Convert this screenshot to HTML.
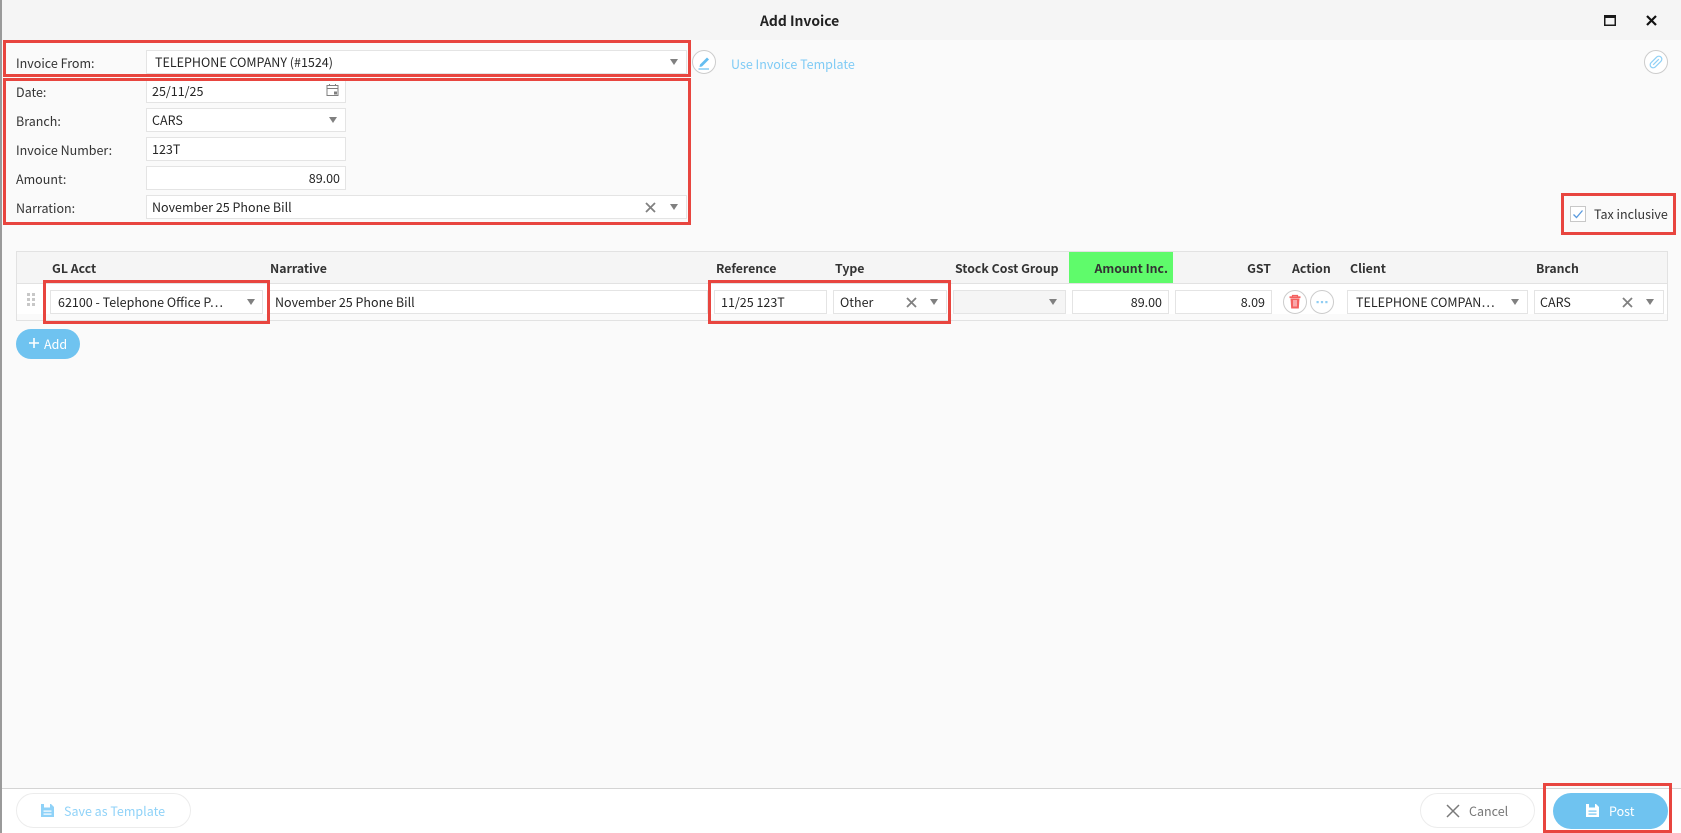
<!DOCTYPE html>
<html><head><meta charset="utf-8"><style>
html,body{margin:0;padding:0}
body{width:1681px;height:833px;position:relative;overflow:hidden;background:#fafafa;font-family:"Noto Sans CJK JP","Liberation Sans",sans-serif;font-size:12.5px;color:#262626}
div,svg,span{box-sizing:border-box}
.a{position:absolute}
.t{position:absolute;white-space:nowrap;line-height:20px}
.l{position:absolute;left:16px;color:#333;white-space:nowrap;line-height:20px}
.i{position:absolute;background:#fff;border:1px solid #e4e4e4;height:24px;line-height:20px;white-space:nowrap;overflow:hidden}
.arr{position:absolute;width:0;height:0;border-left:4px solid transparent;border-right:4px solid transparent;border-top:6px solid #808080}
.h{position:absolute;top:258px;font-weight:700;color:#333;white-space:nowrap;line-height:20px;font-size:12.3px}
.red{position:absolute;border:3px solid #e8453f;pointer-events:none}
.c{position:absolute;width:24px;height:24px;border-radius:50%;border:1px solid #ccc;background:#fff}
</style></head><body>
<div class="a" style="left:0;top:0;width:1681px;height:40px;background:#f5f5f5"></div>
<div class="a" style="left:0;top:0;width:2px;height:833px;background:#9a9a9a"></div>
<div class="t" style="left:760px;top:11px;font-weight:700;font-size:13.9px;color:#222">Add Invoice</div>
<svg class="a" style="left:1604px;top:15px" width="12" height="11"><rect x=".75" y=".75" width="10.5" height="9.5" fill="none" stroke="#1a1a1a" stroke-width="1.5"/><rect x="0" y="0" width="12" height="3" fill="#1a1a1a"/></svg>
<svg class="a" style="left:1646px;top:15px" width="11" height="11"><path d="M1 1L10 10M10 1L1 10" stroke="#111" stroke-width="2.2" fill="none"/></svg>

<div class="l" style="top:53px">Invoice From:</div>
<div class="i" style="left:146px;top:50px;width:541px;padding:1px 8px">TELEPHONE COMPANY (#1524)</div>
<div class="arr" style="left:670px;top:59px"></div>
<div class="c" style="left:692px;top:50px"></div>
<svg class="a" style="left:692px;top:50px" width="24" height="24"><path d="M8 14.5L15 7.5L17 9.5L10 16.5L7.5 17Z" fill="#64bdf0"/><path d="M6.5 19H17" stroke="#64bdf0" stroke-width="1.2"/></svg>
<div class="t" style="left:731px;top:54px;color:#7fcbf5">Use Invoice Template</div>
<div class="c" style="left:1644px;top:50px"></div>
<svg class="a" style="left:1644px;top:50px" width="24" height="24"><g transform="rotate(-45 12 12)" fill="none" stroke="#8fd0f6" stroke-width="1.2"><rect x="5" y="9" width="14" height="6" rx="3"/><path d="M8 12H16"/></g></svg>

<div class="l" style="top:82px">Date:</div>
<div class="i" style="left:146px;top:78px;width:200px;padding:3px 5px 0;border-top:0;height:25px">25/11/25</div>
<svg class="a" style="left:326px;top:83px" width="14" height="14"><rect x="1" y="2.5" width="11" height="10" fill="none" stroke="#7f7f7f"/><path d="M1 5.5H12M3.5 1V3M9.5 1V3" stroke="#7f7f7f"/><rect x="8" y="8.5" width="3" height="3" fill="#7f7f7f"/></svg>
<div class="l" style="top:111px">Branch:</div>
<div class="i" style="left:146px;top:108px;width:200px;padding:1px 5px">CARS</div>
<div class="arr" style="left:329px;top:117px"></div>
<div class="l" style="top:140px">Invoice Number:</div>
<div class="i" style="left:146px;top:137px;width:200px;padding:1px 5px">123T</div>
<div class="l" style="top:169px">Amount:</div>
<div class="i" style="left:146px;top:166px;width:200px;padding:1px 5px;text-align:right">89.00</div>
<div class="l" style="top:198px">Narration:</div>
<div class="i" style="left:146px;top:195px;width:541px;padding:1px 5px">November 25 Phone Bill</div>
<svg class="a" style="left:645px;top:202px" width="11" height="11"><path d="M1 1L10 10M10 1L1 10" stroke="#808080" stroke-width="1.8"/></svg>
<div class="arr" style="left:670px;top:204px"></div>

<div class="a" style="left:1570px;top:206px;width:16px;height:16px;border:1px solid #c8c8c8;background:#fff"></div>
<svg class="a" style="left:1570px;top:206px" width="16" height="16"><path d="M3.5 8.5L6.5 11.5L12.5 4.5" fill="none" stroke="#5a9ade" stroke-width="1.3"/></svg>
<div class="t" style="left:1594px;top:204px;color:#333">Tax inclusive</div>

<!-- table -->
<div class="a" style="left:16px;top:251px;width:1652px;height:70px;border:1px solid #e2e2e2;background:#fff"></div>
<div class="a" style="left:17px;top:252px;width:1650px;height:32px;background:#f5f5f5;border-bottom:1px solid #e2e2e2"></div>
<div class="a" style="left:17px;top:314px;width:1650px;height:6px;background:#fafafa"></div>
<div class="a" style="left:1069px;top:252px;width:104px;height:31px;background:#5ffb6b"></div>
<div class="h" style="left:52px">GL Acct</div>
<div class="h" style="left:270px">Narrative</div>
<div class="h" style="left:716px">Reference</div>
<div class="h" style="left:835px">Type</div>
<div class="h" style="left:955px">Stock Cost Group</div>
<div class="h" style="right:513px">Amount Inc.</div>
<div class="h" style="right:410px">GST</div>
<div class="h" style="left:1292px">Action</div>
<div class="h" style="left:1350px">Client</div>
<div class="h" style="left:1536px">Branch</div>

<svg class="a" style="left:27px;top:293px" width="10" height="15" fill="#c8c8c8"><rect width="3" height="3"/><rect x="5" width="3" height="3"/><rect y="5" width="3" height="3"/><rect x="5" y="5" width="3" height="3"/><rect y="10" width="3" height="3"/><rect x="5" y="10" width="3" height="3"/></svg>
<div class="i" style="left:50px;top:290px;width:213px;padding:1px 7px 0">62100 - Telephone Office P…</div>
<div class="arr" style="left:247px;top:299px"></div>
<div class="i" style="left:269px;top:290px;width:439px;padding:1px 6px 0;border-left:0">November 25 Phone Bill</div>
<div class="i" style="left:714px;top:290px;width:113px;padding:1px 6px 0">11/25 123T</div>
<div class="i" style="left:833px;top:290px;width:114px;padding:1px 6px 0">Other</div>
<svg class="a" style="left:906px;top:297px" width="11" height="11"><path d="M1 1L10 10M10 1L1 10" stroke="#808080" stroke-width="1.8"/></svg>
<div class="arr" style="left:930px;top:299px"></div>
<div class="i" style="left:953px;top:290px;width:113px;background:#f5f5f5"></div>
<div class="arr" style="left:1049px;top:299px"></div>
<div class="i" style="left:1072px;top:290px;width:97px;padding:1px 6px 0;text-align:right">89.00</div>
<div class="i" style="left:1175px;top:290px;width:97px;padding:1px 6px 0;text-align:right">8.09</div>
<div class="c" style="left:1283px;top:290px"></div>
<svg class="a" style="left:1283px;top:290px" width="24" height="24"><path d="M6.5 7.2H17.5" stroke="#f4605f" stroke-width="1.8"/><path d="M9.5 7V5.5H14.5V7" fill="none" stroke="#f4605f" stroke-width="1.2"/><path d="M7.5 8.5H16.5L15.8 18.5H8.2Z" fill="#f4605f"/><rect x="10" y="10" width="4" height="6.5" fill="#f9a6a8"/></svg>
<div class="c" style="left:1310px;top:290px"></div>
<svg class="a" style="left:1310px;top:290px" width="24" height="24" fill="#8fcdf3"><rect x="6.5" y="11" width="2.2" height="2.2"/><rect x="10.9" y="11" width="2.2" height="2.2"/><rect x="15.3" y="11" width="2.2" height="2.2"/></svg>
<div class="i" style="left:1347px;top:290px;width:181px;padding:1px 8px 0">TELEPHONE COMPAN…</div>
<div class="arr" style="left:1511px;top:299px"></div>
<div class="i" style="left:1534px;top:290px;width:130px;padding:1px 5px 0">CARS</div>
<svg class="a" style="left:1622px;top:297px" width="11" height="11"><path d="M1 1L10 10M10 1L1 10" stroke="#808080" stroke-width="1.8"/></svg>
<div class="arr" style="left:1646px;top:299px"></div>

<div class="a" style="left:16px;top:329px;width:64px;height:30px;border-radius:15px;background:#6fc3f0"></div>
<svg class="a" style="left:28px;top:337px" width="12" height="12"><path d="M6 1V11M1 6H11" stroke="#fff" stroke-width="1.6"/></svg>
<div class="t" style="left:44px;top:334px;color:#fff">Add</div>

<!-- footer -->
<div class="a" style="left:2px;top:788px;width:1679px;height:45px;background:#fff;border-top:1px solid #d4d4d4"></div>
<div class="a" style="left:16px;top:793px;width:175px;height:35px;border-radius:18px;border:1px solid #ececec;background:#fff"></div>
<svg class="a" style="left:41px;top:804px" width="13" height="13"><path d="M0 0H10L13 3V13H0Z" fill="#8fd2f8"/><rect x="3" y="0" width="6" height="3.5" fill="#fff"/><rect x="2.5" y="6.5" width="8" height="1.2" fill="#fff"/><rect x="2.5" y="9.5" width="8" height="1.2" fill="#fff"/></svg>
<div class="t" style="left:64px;top:801px;color:#8fd2f8">Save as Template</div>
<div class="a" style="left:1420px;top:793px;width:115px;height:35px;border-radius:18px;border:1px solid #ececec;background:#fff"></div>
<svg class="a" style="left:1446px;top:804px" width="14" height="14"><path d="M1 1L13 13M13 1L1 13" stroke="#7a7a7a" stroke-width="1.5"/></svg>
<div class="t" style="left:1469px;top:801px;color:#777">Cancel</div>
<div class="a" style="left:1553px;top:793px;width:115px;height:36px;border-radius:18px;background:#6fc3f0"></div>
<svg class="a" style="left:1586px;top:804px" width="13" height="13"><path d="M0 0H10L13 3V13H0Z" fill="#fff"/><rect x="3" y="0" width="6" height="3.5" fill="#6fc3f0"/><rect x="2.5" y="6.5" width="8" height="1.2" fill="#6fc3f0"/><rect x="2.5" y="9.5" width="8" height="1.2" fill="#6fc3f0"/></svg>
<div class="t" style="left:1609px;top:801px;color:#fff">Post</div>

<!-- annotation boxes -->
<div class="red" style="left:3px;top:40px;width:688px;height:37px"></div>
<div class="red" style="left:3px;top:78px;width:688px;height:147px"></div>
<div class="red" style="left:1561px;top:193px;width:115px;height:42px"></div>
<div class="red" style="left:43px;top:280px;width:227px;height:44px"></div>
<div class="red" style="left:708px;top:280px;width:243px;height:44px"></div>
<div class="red" style="left:1543px;top:783px;width:129px;height:50px"></div>
</body></html>
